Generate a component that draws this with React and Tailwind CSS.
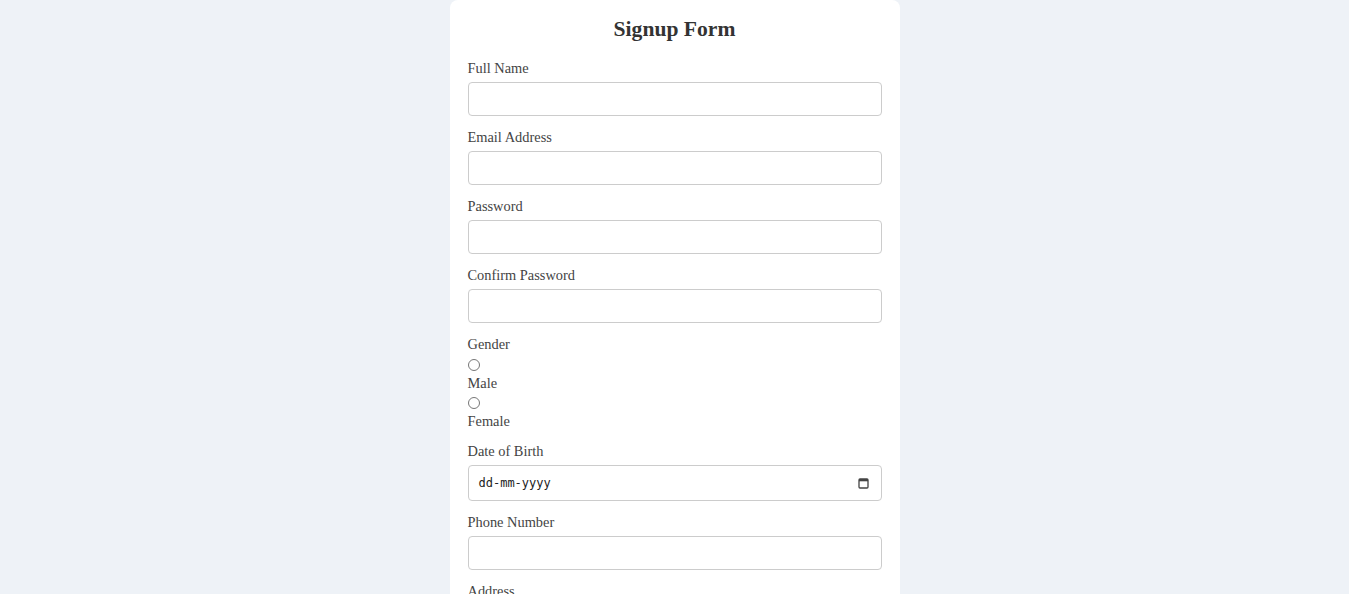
import { useState } from "react";

const labelCls = "block mb-[5px] text-[14.4px] leading-[18px] text-[#444]";
const inputCls =
  "block w-full h-[34px] px-[9px] border border-[#ccc] rounded-[4px] bg-white text-[12px] font-['Liberation_Sans',sans-serif] text-[#222] outline-none focus:border-[#4a90e2]";

function Field({ label, type = "text", name }) {
  return (
    <div className="mb-[12px]">
      <label htmlFor={name} className={labelCls}>
        {label}
      </label>
      <input id={name} name={name} type={type} className={inputCls} />
    </div>
  );
}

export default function App() {
  const [gender, setGender] = useState("");

  return (
    <div className="min-h-screen bg-[#eef2f7] font-['Liberation_Serif',serif]">
      <form
        className="mx-auto w-[450px] bg-white rounded-[8px] px-[18px] pt-[15px] pb-6"
        onSubmit={(e) => e.preventDefault()}
      >
        <h2 className="text-center text-[21.6px] leading-[28px] font-bold text-[#333] mb-[16px]">
          Signup Form
        </h2>

        <Field label="Full Name" name="fullname" />
        <Field label="Email Address" name="email" type="email" />
        <Field label="Password" name="password" type="password" />
        <Field label="Confirm Password" name="confirm" type="password" />

        {/* Gender */}
        <div className="mb-[12px]">
          <label className={labelCls}>Gender</label>
          <div className="h-[16px] pt-[1px]">
            <input
              type="radio"
              name="gender"
              value="male"
              checked={gender === "male"}
              onChange={() => setGender("male")}
              className="block w-[12px] h-[12px] m-0"
            />
          </div>
          <label className="block mb-[4px] text-[14.4px] leading-[18px] text-[#444]">Male</label>
          <div className="h-[16px] pt-[1px]">
            <input
              type="radio"
              name="gender"
              value="female"
              checked={gender === "female"}
              onChange={() => setGender("female")}
              className="block w-[12px] h-[12px] m-0"
            />
          </div>
          <label className="block text-[14.4px] leading-[18px] text-[#444]">Female</label>
        </div>

        {/* Date of birth */}
        <div className="mb-[12px]">
          <label htmlFor="dob" className={labelCls}>
            Date of Birth
          </label>
          <div className="flex items-center w-full h-[36px] pl-[10px] pr-[12px] border border-[#ccc] rounded-[4px] bg-white">
            <span className="flex-1 text-[12px] font-['DejaVu_Sans_Mono',monospace] text-[#222]">
              dd-mm-yyyy
            </span>
            <svg width="11" height="12" viewBox="0 0 11 12" fill="none">
              <rect x="1" y="2" width="9" height="9" rx="1" stroke="#444" strokeWidth="1.3" />
              <rect x="1" y="2" width="9" height="2.3" fill="#444" />
            </svg>
          </div>
        </div>

        <Field label="Phone Number" name="phone" type="tel" />

        <div className="mb-[12px]">
          <label htmlFor="address" className={labelCls}>
            Address
          </label>
          <textarea
            id="address"
            rows={3}
            className="block w-full p-2 border border-[#ccc] rounded-[4px] text-[12px] outline-none"
          />
        </div>

        <button
          type="submit"
          className="w-full h-[36px] rounded-[4px] bg-[#4a90e2] text-white text-[14.4px]"
        >
          Sign Up
        </button>
      </form>
    </div>
  );
}
